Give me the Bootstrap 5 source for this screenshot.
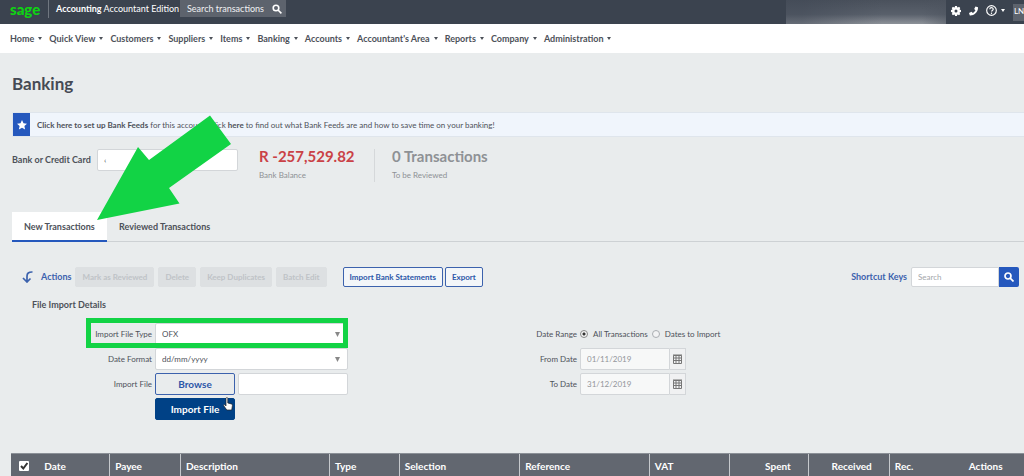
<!DOCTYPE html>
<html lang="en">
<head>
<meta charset="utf-8">
<meta name="viewport" content="width=device-width, initial-scale=1">
<title>Banking</title>
<link rel="stylesheet" href="https://cdn.jsdelivr.net/npm/bootstrap@5.3.0/dist/css/bootstrap.min.css">
<style>
  body { font-family: Lato, "Liberation Sans", sans-serif; font-size: 8px; line-height: 12px; color: #4d5159; background: #e9eced; overflow: hidden; }
  a { color: inherit; text-decoration: none; }
  .topbar { height: 24px; background: #3b434f; color: #fff; padding-left: 10px; }
  .brand-logo { color: #0fd213; font-size: 15px; line-height: 19px; font-weight: 900; width: 38px; height: 22px; }
  .edition { border-left: 1px solid #707780; height: 18px; font-size: 9px; line-height: 18px; padding-left: 7px; width: 132px; }
  .top-search { width: 106px; height: 17px; background: #5d636d; }
  .top-search input { background: none; color: #fff; font-size: 9px; line-height: 16px; padding: 0 0 0 7px; min-width: 0; }
  .top-search input::placeholder { color: #f0f1f3; opacity: 1; }
  .account-blur { width: 160px; height: 24px; background: linear-gradient(#4a515c 0, #59606b 60%, #8d9299 100%); }
  .account-blur::before { content: ""; display: block; height: 24px; background: linear-gradient(90deg, #3f4754 10%, transparent 60%, transparent 85%, #4c535e); opacity: .5; }
  .top-icons { height: 21px; padding-left: 5px; }
  .user-chip { width: 11px; height: 17px; background: #5d636d; font-size: 8px; line-height: 15px; padding-left: 1px; white-space: nowrap; }
  .caret-sm { border: 2px solid transparent; border-top: 3px solid currentColor; border-bottom: 0; display: inline-block; }
  .mainnav { height: 29px; background: #fff; padding-left: 10px; gap: 7px; font-size: 9px; font-weight: 700; }
  .mainnav .nav-link { padding: 0; display: flex; align-items: center; gap: 4px; color: #4d5159; }
  .page-body { padding-left: 12px; }
  .page-heading { font-size: 17px; line-height: 24px; font-weight: 700; margin: 19px 0 16px; color: #454a54; }
  .notice { height: 25px; background: #f0f5fc; border: 1px solid #dfe5ec; border-right: 0; border-radius: 2px 0 0 2px; }
  .notice-icon { width: 17px; background: #2558bd; }
  .notice p { margin: 0 0 0 7px; }
  .field { height: 22px; border: 1px solid #d3d6d9; border-radius: 2px; background-color: #fff; color: #4d5159; font-size: 8px; line-height: 14px; padding: 1px 6px; min-width: 0; }
  .field::placeholder { color: #a3a6ab; opacity: 1; }
  select.field { appearance: none; background: #fff url("data:image/svg+xml,%3Csvg xmlns='http://www.w3.org/2000/svg' viewBox='0 0 5 5'%3E%3Cpath d='M0 0h5L2.5 5z' fill='%23888'/%3E%3C/svg%3E") no-repeat right 7px center / 5px 5px; }
  .account-row { padding-top: 12px; height: 75px; }
  .account-row > label { width: 85px; font-size: 9px; font-weight: 700; white-space: nowrap; line-height: 22px; }
  .account-field { width: 141px; }
  .figure-block { color: #8e9195; height: 33px; }
  .figure-block strong { display: block; font-size: 15px; line-height: 15px; margin-bottom: 5px; }
  .divided { width: 116px; border-right: 1px solid #d5d8da; margin-left: 21px; margin-right: 17px; }
  .figure-block .amount { color: #ca4146; }
  .tabs { border-bottom: 1px solid #cdd1d4; font-size: 9px; font-weight: 700; }
  .tabs .nav-link { padding: 9px 12px 7px; line-height: 12px; color: #4d5159; border-bottom: 2px solid transparent; margin-bottom: -1px; }
  .tabs .nav-link.active { background: #fff; border-color: #2558bd; width: 95px; padding-right: 0; }
  .toolbar { margin: 25px 5px 0 10px; height: 20px; color: #3c62ad; }
  .toolbar-btn { height: 20px; border: 1px solid #3c62ad; border-radius: 2px; padding: 0 6px; font-size: 8px; line-height: 16px; font-weight: 700; color: #2c56a8; background: #f3f6f9; white-space: nowrap; }
  .toolbar-btn:disabled { background: #dde0e2; border-color: #dde0e2; color: #bfc3c7; opacity: 1; }
  .link-strong { font-size: 9px; font-weight: 700; }
  .pair { gap: 2px; }
  .search-group { width: 108px; height: 20px; }
  .search-group .field { height: 20px; flex: 1; border-radius: 2px 0 0 2px; }
  .search-group button { width: 20px; background: #2558bd; border-radius: 0 2px 2px 0; }
  .section-title { font-size: 9px; line-height: 12px; font-weight: 700; margin: 12px 0 12px 20px; }
  .form-lines { display: grid; row-gap: 3px; }
  .form-line { display: flex; align-items: center; height: 22px; gap: 3px; position: relative; }
  .form-line > label, .form-line > .line-label { width: 140px; text-align: right; }
  .form-line.right-side > label, .form-line.right-side > .line-label { width: 59px; }
  .form-line .choice { display: flex; align-items: center; gap: 5px; margin-right: 1px; }
  .wide-field { width: 193px; }
  .file-field { width: 110px; }
  .highlight { position: absolute; left: 74px; top: -5px; width: 262px; height: 30px; border: 5px solid #12d345; pointer-events: none; }
  .big-btn { width: 80px; height: 22px; border: 1px solid #3c62ad; border-radius: 2px; padding: 0; font-size: 10px; line-height: 18px; font-weight: 700; color: #2c56a8; }
  .big-btn.filled { background: #004186; border-color: #004186; color: #fff; position: relative; }
  .hand { position: absolute; right: 1px; top: -2px; }
  .date-field { width: 90px; border-radius: 2px 0 0 2px; background: #f7f8f8; color: #92959a; }
  .calendar-btn { width: 16px; height: 22px; background: #f0f1f2; border: 1px solid #d3d6d9; border-left: 0; padding: 0; margin-left: -3px; display: flex; justify-content: center; align-items: center; }
  .radio-dot { appearance: none; width: 8px; height: 8px; border: 1px solid #aaaeb2; border-radius: 50%; margin: 0; background: #f2f3f4; }
  .radio-dot:checked { background: radial-gradient(#333 0 1px, #f6f6f6 2px); border-color: #888; }
  .grid-table { width: calc(100% + 1px); margin: 33px 0 0 -1px; table-layout: fixed; }
  .grid-table th { height: 24px; background: #626770; color: #fff; border-left: 1px solid #c6c9cd; border-top: 1px solid #8b9097; font-size: 10px; line-height: 12px; font-weight: 700; padding: 6px 5px 5px; white-space: nowrap; }
  .grid-table th.plain { border-left-color: #626770; }
  .grid-table th.num { text-align: right; padding-right: 17px; }
  .tick { appearance: none; width: 10px; height: 10px; margin: 0 0 0 2px; border-radius: 1px; background: #fff url("data:image/svg+xml,%3Csvg xmlns='http://www.w3.org/2000/svg' viewBox='0 0 10 10'%3E%3Cpath d='M2 5l2.3 2.5L8.4 2' fill='none' stroke='%23333' stroke-width='2'/%3E%3C/svg%3E"); display: block; }
  .pointer-arrow { position: absolute; left: 96px; top: 114px; z-index: 5; pointer-events: none; }
</style>
</head>
<body>
<header class="topbar d-flex align-items-start">
  <a class="brand-logo" href="#">sage</a>
  <div class="edition text-nowrap"><strong>Accounting</strong> Accountant Edition</div>
  <div class="top-search d-flex align-items-center">
    <input class="border-0 flex-fill" type="text" aria-label="Search transactions" placeholder="Search transactions">
    <svg class="flex-shrink-0 me-1" width="10" height="10" viewBox="0 0 10 10" fill="none" stroke="#fff" stroke-width="1.6"><circle cx="4" cy="4" r="2.8"/><path d="M6 6l3.4 3.4"/></svg>
  </div>
  <div class="ms-auto account-blur"></div>
  <div class="top-icons d-flex align-items-center">
    <svg width="10" height="10" viewBox="0 0 16 16" fill="#fff"><path fill-rule="evenodd" d="M6.500 0h3l.5 2 1 .4 1.800-1.100 2 2-1 1.700.4 1 1.800.5v3l-1.800.5-.4 1 1 1.700-2 2-1.800-1.100-1 .4-.5 2h-3l-.5-2-1-.4-1.800 1.100-2-2 1-1.700-.4-1L0 9.500v-3L1.800 6l.4-1-1-1.700 2-2L5 2.400l1-.4zM8 5.600a2.400 2.400 0 100 4.800 2.400 2.400 0 000-4.800z"/></svg>
    <svg class="ms-2" width="9" height="10" viewBox="0 0 16 16" fill="#fff"><path d="M11.500 0L16 1.500C16.500 9.500 9.500 16.500 1.500 16L0 11.500l4.500-2.300 2.300 2.300c2-1 3.700-2.700 4.700-4.700L9.200 4.500z"/></svg>
    <svg class="ms-2" width="11" height="11" viewBox="0 0 16 16" fill="none" stroke="#fff" stroke-width="1.700"><circle cx="8" cy="8" r="7"/><path d="M5.500 6.200a2.500 2.500 0 115 0c0 1.700-2.500 1.700-2.500 3.400"/><path d="M8 11v2"/></svg>
    <span class="caret-sm ms-1"></span>
  </div>
  <div class="user-chip ms-2 mt-1">LN</div>
</header>
<nav class="mainnav nav flex-nowrap align-items-center text-nowrap">
  <a class="nav-link" href="#">Home <span class="caret-sm"></span></a>
  <a class="nav-link" href="#">Quick View <span class="caret-sm"></span></a>
  <a class="nav-link" href="#">Customers <span class="caret-sm"></span></a>
  <a class="nav-link" href="#">Suppliers <span class="caret-sm"></span></a>
  <a class="nav-link" href="#">Items <span class="caret-sm"></span></a>
  <a class="nav-link" href="#">Banking <span class="caret-sm"></span></a>
  <a class="nav-link" href="#">Accounts <span class="caret-sm"></span></a>
  <a class="nav-link" href="#">Accountant's Area <span class="caret-sm"></span></a>
  <a class="nav-link" href="#">Reports <span class="caret-sm"></span></a>
  <a class="nav-link" href="#">Company <span class="caret-sm"></span></a>
  <a class="nav-link" href="#">Administration <span class="caret-sm"></span></a>
</nav>
<main class="page-body">
  <h1 class="page-heading">Banking</h1>
  <div class="notice d-flex align-items-center">
    <div class="notice-icon h-100 d-flex align-items-center justify-content-center">
      <svg width="10" height="10" viewBox="0 0 20 20" fill="#fff"><path d="M10 0l3 6.500 7 .8-5.200 4.800 1.400 7L10 15.600 3.800 19.100l1.400-7L0 7.300l7-.8z"/></svg>
    </div>
    <p><a href="#"><strong>Click here to set up Bank Feeds</strong></a> for this account. Click <a href="#"><strong>here</strong></a> to find out what Bank Feeds are and how to save time on your banking!</p>
  </div>
  <div class="account-row d-flex align-items-start">
    <label for="account">Bank or Credit Card</label>
    <input id="account" class="field account-field" type="text" value="‹">
    <div class="figure-block divided"><strong class="amount text-nowrap">R -257,529.82</strong>Bank Balance</div>
    <div class="figure-block"><strong>0 Transactions</strong>To be Reviewed</div>
  </div>
  <nav class="tabs nav">
    <a class="nav-link active" href="#">New Transactions</a>
    <a class="nav-link" href="#">Reviewed Transactions</a>
  </nav>
  <div class="toolbar d-flex align-items-center">
    <svg width="11" height="12" viewBox="0 0 11 12" fill="none" stroke="#3c62ad" stroke-width="1.700"><path d="M10.500 1C6.500 .8 5 2.500 5 5v5.500M1 7l4 4 3.500-3.500"/></svg>
    <a class="link-strong ms-2" href="#">Actions</a>
    <div class="d-flex gap-1 ms-1">
      <button class="toolbar-btn" type="button" disabled>Mark as Reviewed</button>
      <button class="toolbar-btn" type="button" disabled>Delete</button>
      <button class="toolbar-btn" type="button" disabled>Keep Duplicates</button>
      <button class="toolbar-btn" type="button" disabled>Batch Edit</button>
    </div>
    <div class="d-flex ms-3 pair">
      <button class="toolbar-btn" type="button">Import Bank Statements</button>
      <button class="toolbar-btn" type="button">Export</button>
    </div>
    <a class="link-strong ms-auto me-1" href="#">Shortcut Keys</a>
    <div class="search-group d-flex">
      <input class="field" type="text" aria-label="Search" placeholder="Search">
      <button class="border-0 p-0 d-flex align-items-center justify-content-center" type="button" aria-label="Run search">
        <svg width="10" height="10" viewBox="0 0 10 10" fill="none" stroke="#fff" stroke-width="1.700"><circle cx="4" cy="4" r="3"/><path d="M6.200 6.200l3.300 3.300"/></svg>
      </button>
    </div>
  </div>
  <h2 class="section-title">File Import Details</h2>
  <form class="row g-0">
    <div class="col-6 form-lines">
      <div class="form-line">
        <label for="ftype">Import File Type</label>
        <select id="ftype" class="field wide-field"><option>OFX</option></select>
        <span class="highlight"></span>
      </div>
      <div class="form-line">
        <label for="dformat">Date Format</label>
        <select id="dformat" class="field wide-field"><option>dd/mm/yyyy</option></select>
      </div>
      <div class="form-line">
        <label for="fname">Import File</label>
        <button class="big-btn bg-transparent" type="button">Browse</button>
        <input id="fname" class="field file-field" type="text">
      </div>
      <div class="form-line">
        <span class="line-label"></span>
        <button class="big-btn filled" type="button">Import File
          <svg class="hand" width="10" height="15" viewBox="0 0 10 15"><path d="M3 1.500c0-1.300 1.800-1.300 1.800 0V6l3.500.9c1 .3 1.200.8 1.100 1.700L8.700 13H3.800L.8 8.800C.3 7.900 1.300 7.200 2 7.900l1 1z" fill="#fff" stroke="#222" stroke-width=".7"/></svg>
        </button>
      </div>
    </div>
    <div class="col-6 form-lines align-content-start">
      <div class="form-line right-side">
        <span class="line-label">Date Range</span>
        <div class="choice"><input id="rall" class="radio-dot" type="radio" name="range" checked><label for="rall">All Transactions</label></div>
        <div class="choice"><input id="rdates" class="radio-dot" type="radio" name="range"><label for="rdates">Dates to Import</label></div>
      </div>
      <div class="form-line right-side">
        <label for="dfrom">From Date</label>
        <input id="dfrom" class="field date-field" type="text" value="01/11/2019">
        <button class="calendar-btn" type="button" aria-label="Pick from date"><svg width="9" height="10" viewBox="0 0 9 10" fill="none" stroke="#777"><path d="M.5 1.500h8v8h-8zM0 1h9M.5 4h8M.5 6.500h8M3 2v7.500M6 2v7.500"/></svg></button>
      </div>
      <div class="form-line right-side">
        <label for="dto">To Date</label>
        <input id="dto" class="field date-field" type="text" value="31/12/2019">
        <button class="calendar-btn" type="button" aria-label="Pick to date"><svg width="9" height="10" viewBox="0 0 9 10" fill="none" stroke="#777"><path d="M.5 1.500h8v8h-8zM0 1h9M.5 4h8M.5 6.500h8M3 2v7.500M6 2v7.500"/></svg></button>
      </div>
    </div>
  </form>
  <table class="grid-table">
    <colgroup>
      <col style="width:2.7%"><col style="width:7%"><col style="width:7%"><col style="width:14.7%"><col style="width:6.9%"><col style="width:11.900%"><col style="width:12.800%"><col style="width:7.900%"><col style="width:7.800%"><col style="width:8%"><col>
      <col style="width:6%">
    </colgroup>
    <thead><tr>
      <th class="plain"><input class="tick" type="checkbox" checked aria-label="Select all"></th>
      <th class="plain">Date</th><th>Payee</th><th>Description</th><th>Type</th><th>Selection</th><th>Reference</th><th>VAT</th><th class="num">Spent</th><th class="num">Received</th><th>Rec.</th><th class="plain">Actions</th>
    </tr></thead>
  </table>
</main>
<svg class="pointer-arrow" width="136" height="108" viewBox="0 0 136 108"><path d="M1 106L42 33l11 13 61-44.500 21 28.500-62 44 10.500 15.500z" fill="#12d345"/></svg>
<script src="https://cdn.jsdelivr.net/npm/bootstrap@5.3.0/dist/js/bootstrap.bundle.min.js"></script>
</body>
</html>
